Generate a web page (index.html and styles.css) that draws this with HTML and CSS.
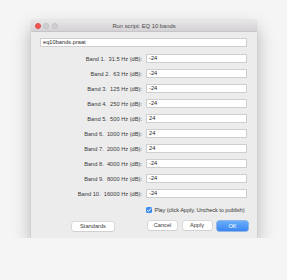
FILE: index.html
```html
<!DOCTYPE html>
<html lang="en">
<head>
  <meta charset="UTF-8">
  <title>Run script: EQ 10 bands</title>
  <link rel="stylesheet" href="styles.css">
</head>
<body>
  <div class="window">
    <div class="titlebar">
      <div class="lights">
        <span class="light close"></span>
        <span class="light"></span>
        <span class="light"></span>
      </div>
      <div class="title">Run script: EQ 10 bands</div>
    </div>

    <div class="content">
      <div class="field file">eq10bands.praat</div>

      <div class="form">
        <label>Band 1.&nbsp; 31.5 Hz (dB):</label><div class="field">-24</div>
        <label>Band 2.&nbsp; 63 Hz (dB):</label><div class="field">-24</div>
        <label>Band 3.&nbsp; 125 Hz (dB):</label><div class="field">-24</div>
        <label>Band 4.&nbsp; 250 Hz (dB):</label><div class="field">-24</div>
        <label>Band 5.&nbsp; 500 Hz (dB):</label><div class="field">24</div>
        <label>Band 6.&nbsp; 1000 Hz (dB):</label><div class="field">24</div>
        <label>Band 7.&nbsp; 2000 Hz (dB):</label><div class="field">24</div>
        <label>Band 8.&nbsp; 4000 Hz (dB):</label><div class="field">-24</div>
        <label>Band 9.&nbsp; 8000 Hz (dB):</label><div class="field">-24</div>
        <label>Band 10.&nbsp; 16000 Hz (dB):</label><div class="field">-24</div>
        <span></span>
        <div class="check">
          <span class="box">
            <svg width="6" height="6" viewBox="0 0 6 6"><path d="M1.2 3.1 L2.5 4.4 L4.9 1.5" fill="none" stroke="#fff" stroke-width="1"/></svg>
          </span>
          <span class="check-text">Play (click Apply. Uncheck to publish)</span>
        </div>
      </div>

      <div class="buttons">
        <div class="btn standards">Standards</div>
        <div class="right">
          <div class="btn cancel">Cancel</div>
          <div class="btn apply">Apply</div>
          <div class="btn ok">OK</div>
        </div>
      </div>
    </div>
  </div>
</body>
</html>
```

FILE: styles.css
```css
body {
  margin: 0;
  background-color: #f5f5f5;
  font-family: 'Liberation Sans', Arial, sans-serif;
  font-size: 5.7px;
  color: #2a2a2a;
}
.window {
  margin: 20px 0 0 31px;
  width: 226px;
  height: 218px;
  background: #ececec;
  border-radius: 3px 3px 0 0;
  box-shadow: 0 8px 18px rgba(0, 0, 0, 0.28), 0 0 1px rgba(0, 0, 0, 0.25);
  box-sizing: border-box;
}
.titlebar {
  height: 11px;
  display: flex;
  align-items: center;
  position: relative;
  background: linear-gradient(#e8e6e8, #d4d2d4);
  border-bottom: 1px solid #c6c4c6;
  border-radius: 3px 3px 0 0;
}
.lights {
  display: flex;
  gap: 2.5px;
  padding-left: 3.5px;
}
.light {
  width: 6px;
  height: 6px;
  border-radius: 50%;
  background: #d2d0d2;
  border: 0.5px solid #c4c2c4;
  box-sizing: border-box;
}
.light.close {
  background: #fc5753;
  border-color: #df4744;
}
.title {
  position: absolute;
  left: 0;
  right: 0;
  text-align: center;
  font-size: 5.8px;
  color: #4a4a4a;
}
.content {
  padding: 6px 10px 0 9px;
}
.field {
  height: 9px;
  line-height: 7px;
  background: #fff;
  border: 1px solid #cfcfcf;
  box-sizing: border-box;
  padding: 0 2px;
}
.file {
  margin-bottom: 7px;
}
.form {
  display: grid;
  grid-template-columns: 102px 1fr;
  column-gap: 4px;
  row-gap: 6px;
  align-items: center;
}
.form label {
  text-align: right;
  white-space: nowrap;
  color: #3a3a3a;
}
.check {
  display: flex;
  align-items: center;
  gap: 2.5px;
  margin-top: 3px;
  color: #3a3a3a;
  white-space: nowrap;
}
.check-text {
  letter-spacing: -0.1px;
}
.box {
  flex: none;
  width: 6px;
  height: 6px;
  border-radius: 1.5px;
  background: #3c8cf0;
  display: flex;
}
.buttons {
  display: flex;
  justify-content: space-between;
  align-items: center;
  margin-top: 8px;
}
.right {
  display: flex;
  gap: 5.5px;
  margin-right: -1px;
}
.btn {
  height: 9px;
  line-height: 9px;
  text-align: center;
  background: #fff;
  border-radius: 2px;
  box-shadow: 0 0 0 0.5px #c8c8c8, 0 0.5px 0.5px rgba(0, 0, 0, 0.15);
  color: #3a3a3a;
}
.standards {
  width: 42px;
  margin-left: 32px;
}
.cancel,
.apply {
  width: 29px;
}
.ok {
  width: 31px;
  height: 10px;
  line-height: 10px;
  background: linear-gradient(#69aefa, #3a86f2);
  color: #fff;
  box-shadow: 0 0 0 0.5px #3a7fe0;
}
```
